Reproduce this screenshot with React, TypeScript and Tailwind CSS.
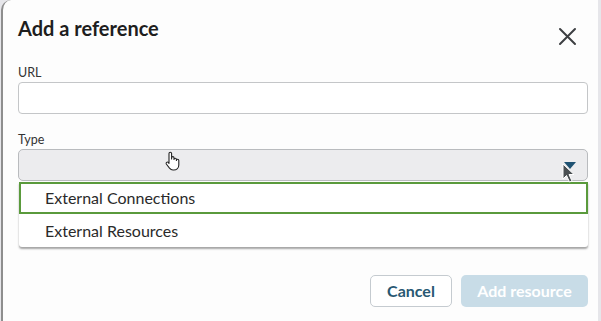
import { useState } from "react"

const options = ["External Connections", "External Resources"]

export default function App() {
  const [url, setUrl] = useState("")

  return (
    <div className="w-[601px] h-[321px] overflow-hidden bg-[#e6e6ea] font-['Lato',sans-serif]">
      <div className="relative h-[330px] ml-[1px] mr-[3px] bg-[#fdfdfd] border-l-[2px] border-[#8e8e8e] rounded-tl-[10px] pl-[15px] pr-[8px] pt-[14px]">
        {/* Header */}
        <div className="flex items-start justify-between">
          <h2 className="text-[20px] leading-[28px] font-bold text-[#1e1e1e]">Add a reference</h2>
          <button type="button" className="mt-[13px] mr-[13px] text-[#3d3f42]" aria-label="Close">
            <svg width="19" height="19" viewBox="0 0 19 19" fill="none" stroke="currentColor" strokeWidth="2" strokeLinecap="round">
              <path d="M2 2L17 17M17 2L2 17" />
            </svg>
          </button>
        </div>

        {/* URL */}
        <label className="block mt-[19px] text-[12.5px] leading-[16px] text-[#333]">URL</label>
        <input
          className="mt-[1px] block w-[570px] h-[32px] rounded-[4px] border border-[#c4c6c8] bg-white px-2 outline-none"
          value={url}
          onChange={(e) => setUrl(e.target.value)}
        />

        {/* Type */}
        <label className="block mt-[18px] text-[12.5px] leading-[16px] text-[#333]">Type</label>
        <div className="relative mt-[1px] w-[570px]">
          <div className="h-[32px] rounded-[5px] border border-[#b9bbbe] bg-[#ececee] flex items-center justify-end pr-[11px]">
            <svg width="12" height="7" viewBox="0 0 12 7">
              <path d="M0 0H12L6 7Z" fill="#1f5272" />
            </svg>
          </div>

          {/* dropdown menu */}
          <ul className="absolute left-[1px] right-0 top-[33px] z-10 bg-white shadow-[0_2px_2px_rgba(0,0,0,0.35)] rounded-b-[3px]">
            {options.map((o, i) => (
              <li
                key={o}
                className={
                  i === 0
                    ? "h-[32px] flex items-center pl-[24px] text-[16px] text-[#2a2a2a] border-[2px] border-[#5a9a3c]"
                    : "h-[33px] flex items-center pl-[26px] text-[16px] text-[#2a2a2a]"
                }
              >
                {o}
              </li>
            ))}
          </ul>

          {/* hand cursor */}
          <svg className="absolute left-[146px] top-[2px] z-20" width="18" height="20" viewBox="0 0 18 20">
            <path
              d="M5 10V2.5a1.3 1.3 0 0 1 2.6 0V8l0-1.2a1.2 1.2 0 0 1 2.4 0V8.5a1.2 1.2 0 0 1 2.4 0v1a1.2 1.2 0 0 1 2.4 0V14c0 2.8-2.2 5-5 5H9c-1.6 0-2.6-.7-3.5-1.8L2.3 13a1.3 1.3 0 0 1 2-1.6L5 12.4Z"
              fill="white"
              stroke="#222"
              strokeWidth="1.1"
              strokeLinejoin="round"
            />
          </svg>

          {/* arrow cursor */}
          <svg className="absolute left-[544px] top-[14px] z-20" width="14" height="20" viewBox="0 0 14 20">
            <path d="M1 1V16L4.5 12.5L7.5 19L10 18L7 11.5H12Z" fill="#4a4f52" stroke="white" strokeWidth="1" strokeLinejoin="round" />
          </svg>
        </div>

        {/* Footer */}
        <div className="mt-[94px] w-[570px] flex justify-end gap-[9px]">
          <button
            type="button"
            className="w-[82px] h-[32px] rounded-[5px] border border-[#c5cbd0] bg-white text-[16px] font-bold text-[#285872]"
          >
            Cancel
          </button>
          <button
            type="button"
            disabled
            className="w-[127px] h-[32px] rounded-[5px] bg-[#c8dce7] text-[16px] font-bold text-white"
          >
            Add resource
          </button>
        </div>
      </div>
    </div>
  )
}
